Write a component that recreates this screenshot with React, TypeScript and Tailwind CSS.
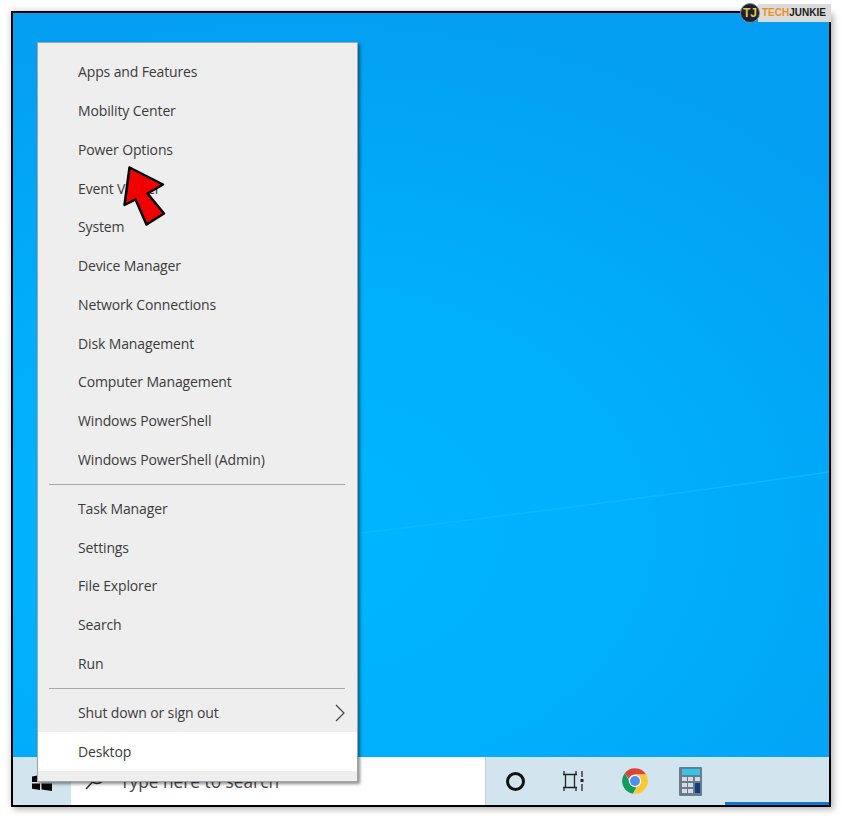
const FONT = "font-['Open_Sans','Noto_Sans',sans-serif]";

const topGroup = [
  "Apps and Features",
  "Mobility Center",
  "Power Options",
  "Event Viewer",
  "System",
  "Device Manager",
  "Network Connections",
  "Disk Management",
  "Computer Management",
  "Windows PowerShell",
  "Windows PowerShell (Admin)",
];

const midGroup = ["Task Manager", "Settings", "File Explorer", "Search", "Run"];

function MenuRow({ label, active, chevron }: { label: string; active?: boolean; chevron?: boolean }) {
  return (
    <div className={`flex h-[38.75px] items-center justify-between pl-[40.5px] pr-[11px] ${active ? "bg-white" : ""}`}>
      <span className="text-[14px] leading-none tracking-[-0.13px] text-[#3b3b3b]">{label}</span>
      {chevron && (
        <svg width="12" height="18" viewBox="0 0 12 18" fill="none" stroke="#4a4440" strokeWidth="1.2">
          <path d="M2 1l8 8-8 8" />
        </svg>
      )}
    </div>
  );
}

function Divider() {
  return (
    <div className="flex h-[10.2px] items-center pl-[11px] pr-[12px]">
      <div className="h-px w-full bg-[#a8a8a8]" />
    </div>
  );
}

function WindowsIcon() {
  return (
    <svg width="22" height="20" viewBox="0 0 22 20" fill="#0a0a0a">
      <path d="M1 4.500l8-1.500v7H1zM10.500 2.800L21 1v9H10.500zM1 11.500h8v6.500l-8-1.300zM10.500 11.500H21V19l-10.500-1.500z" />
    </svg>
  );
}

function ChromeIcon() {
  return (
    <svg width="28" height="28" viewBox="0 0 48 48">
      <path d="M24 2a22 22 0 0 1 19.050 11H24a11 11 0 0 0-10.400 7.400L6.500 10.500A22 22 0 0 1 24 2z" fill="#db4437" />
      <path d="M6.500 10.500l9.500 16.500a11 11 0 0 0 10.500 7.700L20.500 45.700A22 22 0 0 1 6.500 10.500z" fill="#0f9d58" />
      <path d="M43.050 13A22 22 0 0 1 20.500 45.700L30 29.500a11 11 0 0 0 0-11 11 11 0 0 0-6-5.500z" fill="#fcc934" />
      <circle cx="24" cy="24" r="10.500" fill="#fff" />
      <circle cx="24" cy="24" r="8.500" fill="#4f8ef0" />
    </svg>
  );
}

function CalculatorIcon() {
  return (
    <div className="grid h-[29px] w-[23px] grid-cols-3 grid-rows-[6px_1fr_1fr_1fr] gap-[1.500px] rounded-[1px] bg-[#6b7b8b] p-[2.500px]">
      <div className="col-span-3 bg-[#35c5e8]" />
      <div className="bg-[#d5dde3]" />
      <div className="bg-[#d5dde3]" />
      <div className="bg-[#d5dde3]" />
      <div className="bg-[#d5dde3]" />
      <div className="bg-[#d5dde3]" />
      <div className="row-span-2 bg-[#0f3f7e]" />
      <div className="bg-[#d5dde3]" />
      <div className="bg-[#d5dde3]" />
    </div>
  );
}

function TaskViewIcon() {
  return (
    <svg width="21" height="20" viewBox="0 0 21 20" fill="none" stroke="#222" strokeWidth="1.300">
      <path d="M1 0v3M13 0v3M1 17v3M13 17v3M0 3.500h14M0 16.500h14M2.500 3.500v13M11.500 3.500v13M19 0v6M19 13v7" />
      <rect x="17.500" y="8" width="3" height="3" fill="#222" stroke="none" />
    </svg>
  );
}

function Logo() {
  return (
    <div className="absolute right-[-2px] top-[-10.500px] flex items-center">
      <div className="z-10 flex h-[20px] w-[20px] items-center justify-center rounded-full border border-[#888] bg-[#18203a] font-['Liberation_Sans',sans-serif] text-[12px] font-bold leading-none text-[#f3c32b]">
        TJ
      </div>
      <div className="ml-[-2px] flex h-[18px] w-[73px] items-center justify-start bg-[#dcdcdc] pl-[4px] font-['Liberation_Sans',sans-serif] text-[10px] font-bold">
        <span className="text-[#e8901a]">TECH</span>
        <span className="text-[#1a1a1a]">JUNKIE</span>
      </div>
    </div>
  );
}

export default function App() {
  return (
    <div className={`h-[818px] w-[842px] bg-white pl-[11px] pt-[11px] ${FONT}`}>
      <div className="relative flex h-[796px] w-[820px] flex-col border-[2.500px] border-black shadow-[3px_3px_6px_rgba(0,0,0,0.25),-2px_-2px_6px_rgba(0,0,0,0.1)]">
        {/* Wallpaper */}
        <div className="relative flex-1 overflow-hidden bg-[radial-gradient(ellipse_90%_70%_at_35%_70%,#00b6ff_0%,#00b0fd_45%,#049ff3_100%)]">
          <svg className="absolute inset-0 h-full w-full" viewBox="0 0 816 744" preserveAspectRatio="none">
            <path d="M340 521Q600 490 816 459" stroke="#0cb9ff" strokeWidth="1.500" fill="none" />
          </svg>
        </div>

        {/* Taskbar */}
        <div className="flex h-[48px] items-center bg-[#d2e5ee]">
          <div className="flex h-full w-[58px] items-center justify-center pt-[1px]">
            <WindowsIcon />
          </div>
          <div className="flex h-full w-[415px] items-center gap-[14px] border-r border-[#c4ced3] bg-white pl-[13px] pt-[1px]">
            <svg className="-translate-y-[2px]" width="22" height="22" viewBox="0 0 22 22" fill="none" stroke="#333" strokeWidth="1.500">
              <circle cx="13" cy="8" r="6.500" />
              <path d="M8.500 13L2 20" />
            </svg>
            <span className="text-[17.300px] leading-none text-[#4b4b4b]">Type here to search</span>
          </div>
          <div className="relative flex h-full flex-1 items-center">
            <div className="ml-[20px] h-[19px] w-[19px] rounded-full border-[3px] border-[#111]" />
            <div className="ml-[38px] flex">
              <TaskViewIcon />
            </div>
            <div className="ml-[37px] flex">
              <ChromeIcon />
            </div>
            <div className="ml-[30px] flex">
              <CalculatorIcon />
            </div>
            <div className="absolute bottom-0 right-0 h-[3px] w-[104px] bg-[#0a78d7]" />
          </div>
        </div>

        {/* Context menu */}
        <div className="absolute left-[23.500px] top-[28.500px] w-[321px] border border-[#a5a5a5] bg-[#eeeeee] pb-[10.400px] pt-[10.600px] shadow-[2px_2px_3px_rgba(0,0,0,0.45)]">
          {topGroup.map((label) => (
            <MenuRow key={label} label={label} />
          ))}
          <Divider />
          {midGroup.map((label) => (
            <MenuRow key={label} label={label} />
          ))}
          <Divider />
          <MenuRow label="Shut down or sign out" chevron />
          <MenuRow label="Desktop" active />
        </div>

        {/* Red arrow annotation */}
        <svg className="absolute left-[109px] top-[150.500px]" width="50" height="66" viewBox="0 0 50 66">
          <path d="M7.500 3.500L41 20.500 25.500 29.500 42 49.500 24.500 60.500 13.500 35.500 2.500 41z" fill="#f00000" stroke="#000" strokeWidth="2.500" strokeLinejoin="round" />
        </svg>

        <Logo />
      </div>
    </div>
  );
}
